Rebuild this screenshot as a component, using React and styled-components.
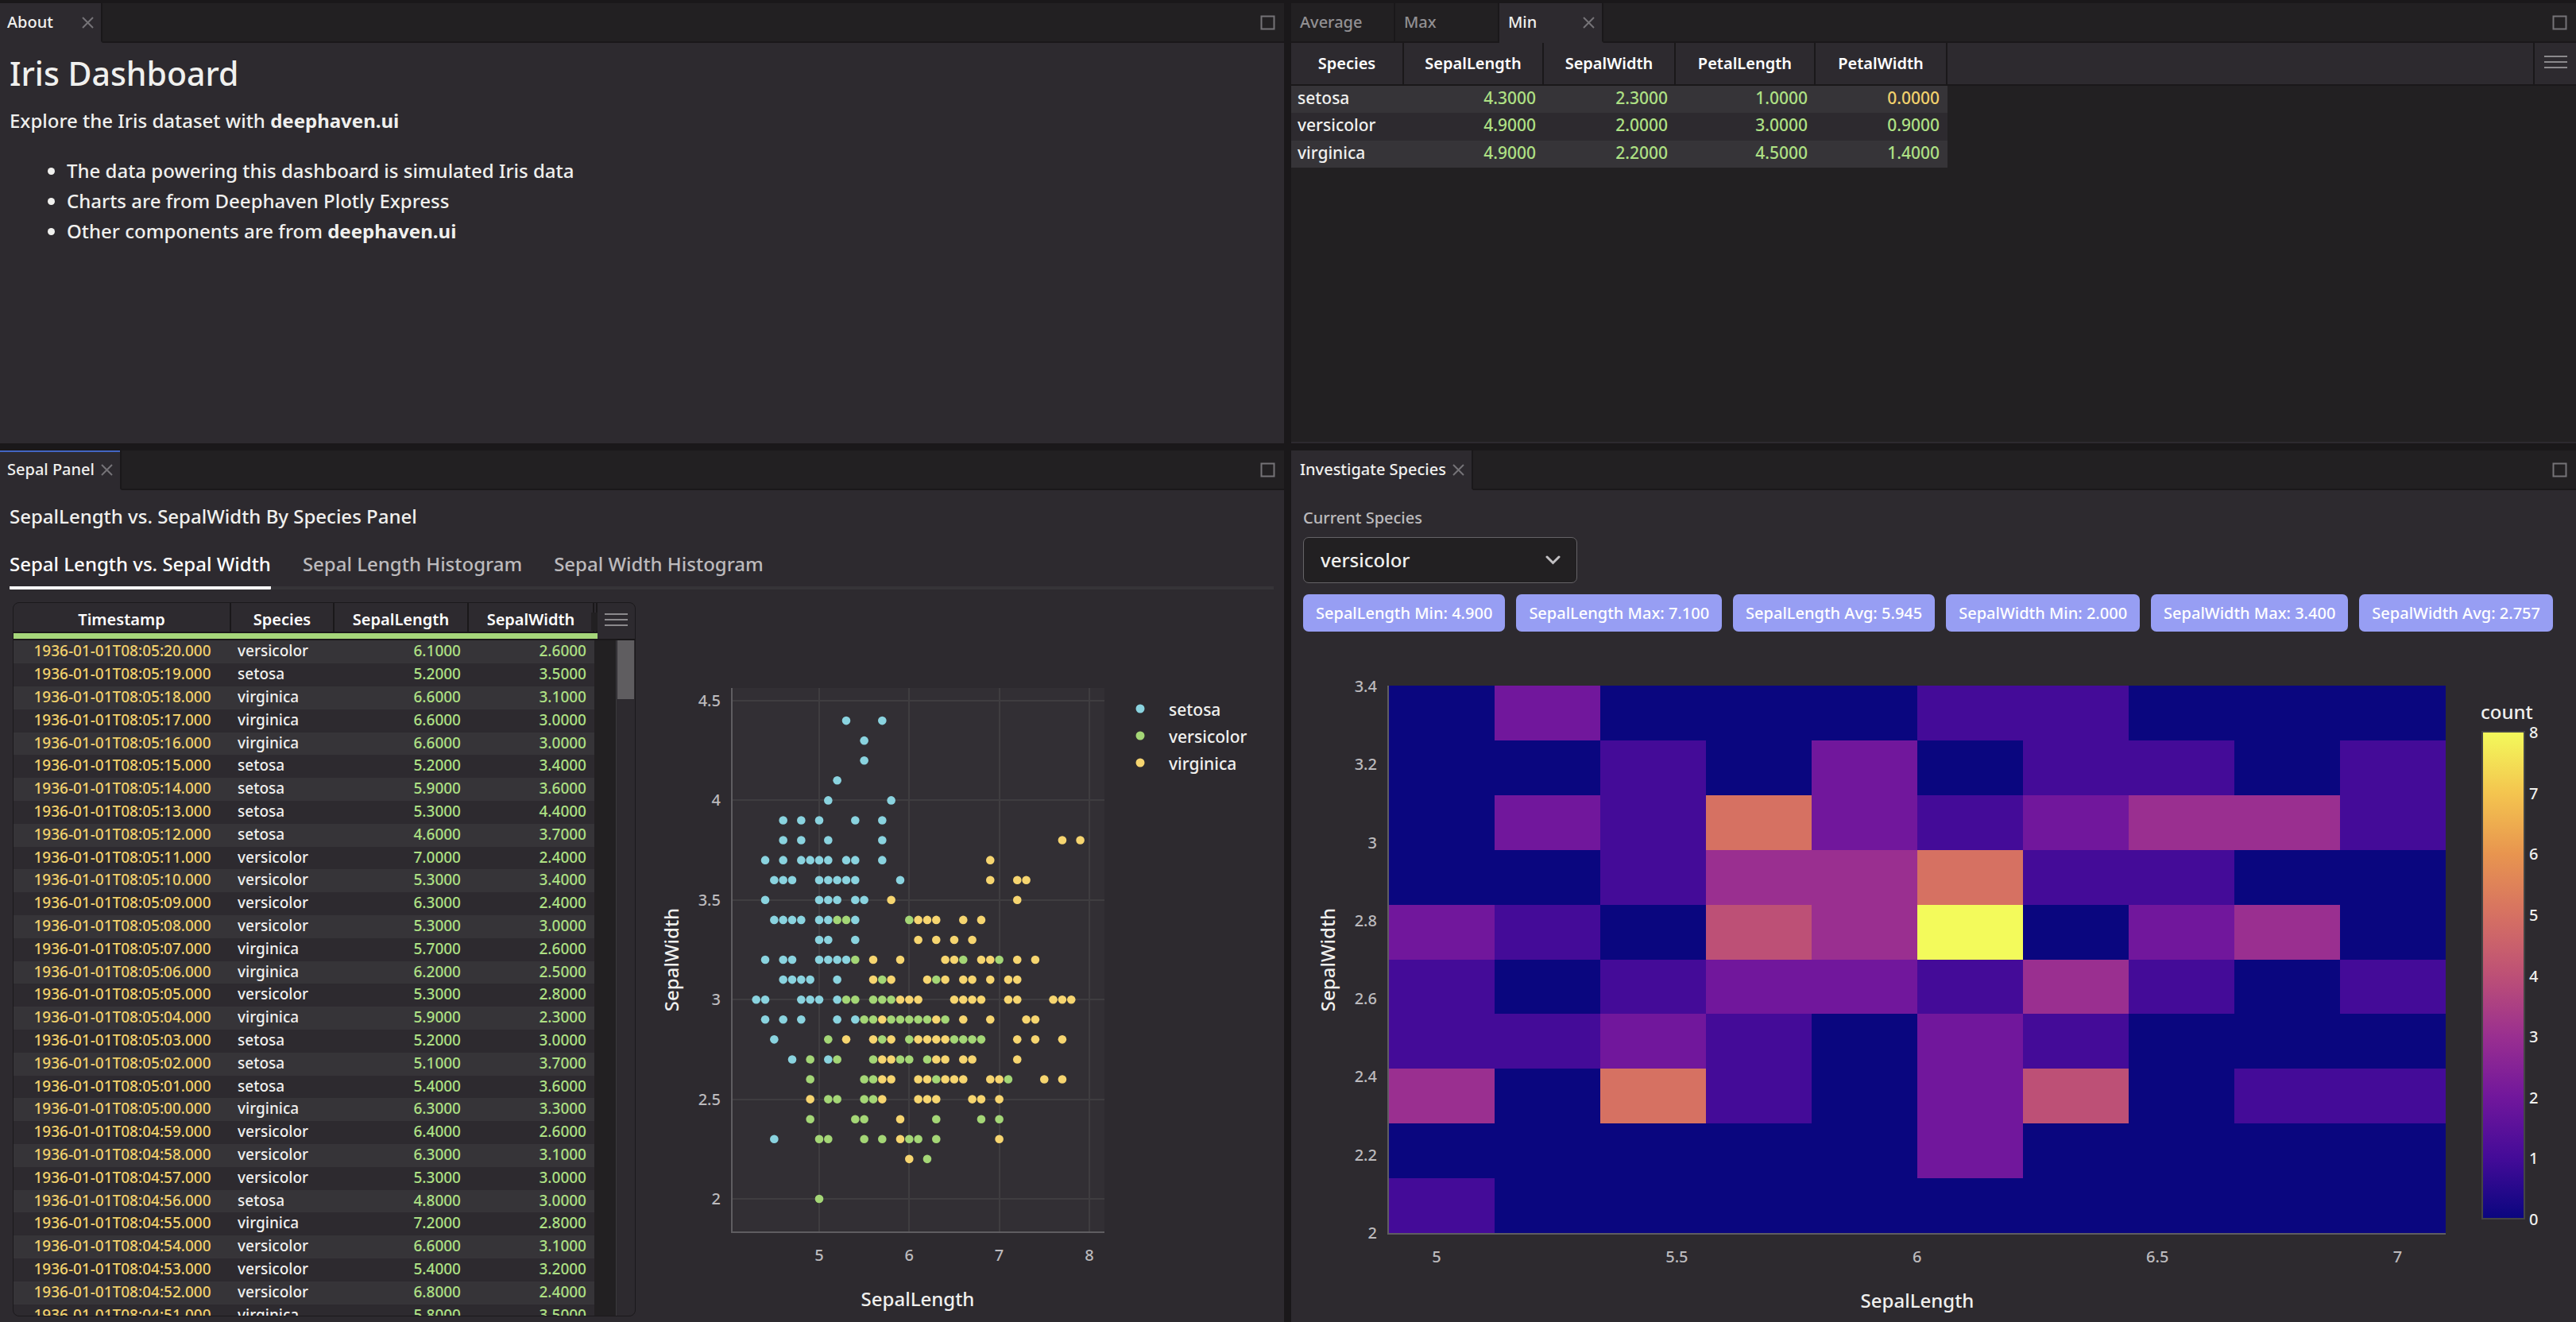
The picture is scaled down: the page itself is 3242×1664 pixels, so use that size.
import React from "react";
import styled, { createGlobalStyle, css } from "styled-components";

const color = {
  frame: "#1a181a",
  bar: "#222022",
  panel: "#2d2a2f",
  stripe: "#363438",
  plot: "#322f34",
  gridline: "#3f3d40",
  axis: "#5f5d61",
  text: "#f0f0ee",
  muted: "#bcbabd",
  dim: "#929093",
  icon: "#757377",
  green: "#aee084",
  yellow: "#f1d06c",
  loading: "#a6d67a",
  action: "#979ef3",
  focus: "#4365c2",
};

const species = { b: "#8ad3df", g: "#a4d676", y: "#f6d570" };

const GlobalStyle = createGlobalStyle`
  *, *::before, *::after { box-sizing: border-box; }
  body {
    margin: 0;
    background: ${color.frame};
    color: ${color.text};
    font-family: "Noto Sans", "Open Sans", sans-serif;
    font-size: 24px;
    font-weight: 500;
    line-height: 38px;
  }
  button, select { font: inherit; color: inherit; }
  strong { font-weight: 700; }
`;

/* ---------- dashboard frame ---------- */

const Dashboard = styled.main`
  height: 100vh;
  padding-top: 4px;
  display: grid;
  grid-template-columns: minmax(0, 1616fr) minmax(0, 1617fr);
  grid-template-rows: minmax(0, 554fr) minmax(0, 1097fr);
  gap: 9px;
`;

const Panel = styled.section`
  display: flex;
  flex-direction: column;
  min-width: 0;
  min-height: 0;
  overflow: hidden;
  background: ${color.panel};
`;

const TabBar = styled.header`
  display: flex;
  flex: none;
  height: 50px;
  background: ${color.bar};
  font-size: 20px;
  line-height: 48px;
`;

const PanelTab = styled.div`
  display: flex;
  justify-content: space-between;
  align-items: stretch;
  gap: 8px;
  min-width: ${(p) => (p.$edge ? 129 : 131)}px;
  padding: 0 9px 0 ${(p) => (p.$edge ? 9 : 11)}px;
  border-right: 2px solid ${color.frame};
  border-bottom: 2px solid ${(p) => (p.$active ? color.panel : color.frame)};
  background: ${(p) => (p.$active ? color.panel : color.bar)};
  color: ${(p) => (p.$active ? color.text : color.dim)};
  box-shadow: ${(p) => (p.$focused ? `inset 0 2px ${color.focus}` : "none")};
`;

const PlainButton = styled.button`
  display: flex;
  align-items: center;
  padding: 0;
  border: 0;
  background: none;
  cursor: pointer;
`;

const TabBarEnd = styled.div`
  display: flex;
  flex: 1;
  justify-content: flex-end;
  align-items: center;
  padding-right: 11px;
  border-bottom: 2px solid ${color.frame};
`;

const CloseIcon = () => (
  <svg width="15" height="15" viewBox="0 0 15 15" aria-hidden="true">
    <path d="M1 1 14 14M14 1 1 14" stroke={color.icon} strokeWidth="2" />
  </svg>
);

const MaximizeIcon = () => (
  <svg width="19" height="19" viewBox="0 0 19 19" aria-hidden="true">
    <rect x="1.5" y="1.5" width="16" height="16" fill="none" stroke={color.icon} strokeWidth="2" />
  </svg>
);

const MenuIcon = () => (
  <svg width="29" height="18" viewBox="0 0 29 18" aria-hidden="true">
    <path d="M0 2H29M0 9H29M0 16H29" stroke="#8b898c" strokeWidth="2" />
  </svg>
);

function PanelHeader({ tabs, active, focused, edge }) {
  return (
    <TabBar>
      {tabs.map((t) => (
        <PanelTab key={t} $active={t === active} $focused={focused} $edge={edge}>
          <PlainButton>{t}</PlainButton>
          {t === active && (
            <PlainButton aria-label={`Close ${t}`}>
              <CloseIcon />
            </PlainButton>
          )}
        </PanelTab>
      ))}
      <TabBarEnd>
        <PlainButton aria-label="Maximize panel">
          <MaximizeIcon />
        </PlainButton>
      </TabBarEnd>
    </TabBar>
  );
}

/* ---------- about ---------- */

const Article = styled.div`
  padding: 12px;
`;

const Title = styled.h1`
  margin: 0 0 15px;
  font-size: 41px;
  font-weight: 500;
  line-height: 52px;
`;

const Paragraph = styled.p`
  margin: 0;
`;

const BulletList = styled.ul`
  margin: 25px 0 0;
  padding-left: 72px;
`;

/* ---------- data grids ---------- */

const DataTable = styled.table`
  flex: none;
  width: ${(p) => p.$width}px;
  table-layout: fixed;
  border-spacing: 0;
  align-self: flex-start;
`;

const HeadCell = styled.th`
  position: relative;
  height: ${(p) => (p.$compact ? 38 : 54)}px;
  padding: ${(p) => (p.$compact ? "6px 0 0" : "0")};
  border-right: 2px solid ${color.frame};
  border-bottom: 2px solid ${color.frame};
  background: ${color.panel};
  color: #fff;
  font-size: 20px;
  font-weight: 600;
  line-height: 30px;
`;

const ColumnHandle = styled.span`
  position: absolute;
  right: -6px;
  bottom: 1px;
  z-index: 1;
  width: 8px;
  height: 23px;
  background: ${color.bar};
`;

const LoadingCell = styled.td`
  height: 9px;
  padding: 0;
  border-bottom: 2px solid ${color.frame};
  background: ${color.loading};
`;

const stripes = css`
  &:nth-child(odd) td { background: ${color.stripe}; }
  &:nth-child(even) td { background: ${color.panel}; }
`;

const SummaryRow = styled.tr`
  height: 34px;
  ${stripes}
  td { font-size: 21px; line-height: 30px; }
  &:nth-child(even) { height: 35px; }
`;

const TickRow = styled.tr`
  height: 29px;
  ${stripes}
  td { font-size: 19px; line-height: 27px; }
  &:nth-child(5n) { height: 28px; }
`;

const Cell = styled.td`
  padding: 0 ${(p) => (p.$kind === "time" ? 0 : 10)}px 0 ${(p) => (p.$kind === "time" ? 0 : 8)}px;
  vertical-align: top;
  white-space: nowrap;
  text-align: ${(p) => ({ num: "right", zero: "right", time: "center" }[p.$kind] || "left")};
  color: ${(p) => ({ num: color.green, zero: color.yellow, time: color.yellow }[p.$kind] || color.text)};
`;

const EmptyCell = styled.td`
  &&& { background: ${color.bar}; }
  padding: 0;
`;

const GridArea = styled.div`
  display: flex;
  flex: 1;
  background: ${color.bar};
  border-bottom: 2px solid ${color.panel};
`;

const HeadFiller = styled.div`
  flex: 1;
  height: 54px;
  border-right: 2px solid ${color.frame};
  border-bottom: 2px solid ${color.frame};
  background: ${color.panel};
`;

const MenuCell = styled.div`
  display: flex;
  flex: none;
  justify-content: center;
  width: ${(p) => p.$width}px;
  height: ${(p) => p.$height}px;
  padding-bottom: 4px;
  border-bottom: 2px solid ${color.frame};
  background: ${color.panel};
`;

const minRows = [
  ["setosa", "4.3000", "2.3000", "1.0000", "0.0000"],
  ["versicolor", "4.9000", "2.0000", "3.0000", "0.9000"],
  ["virginica", "4.9000", "2.2000", "4.5000", "1.4000"],
];

function SummaryGrid() {
  return (
    <GridArea>
      <DataTable $width={826}>
        <colgroup>
          {[142, 176, 166, 176, 166].map((w, i) => (
            <col key={i} width={w} />
          ))}
        </colgroup>
        <thead>
          <tr>
            {["Species", "SepalLength", "SepalWidth", "PetalLength", "PetalWidth"].map((h) => (
              <HeadCell key={h} scope="col">{h}</HeadCell>
            ))}
          </tr>
        </thead>
        <tbody>
          {minRows.map(([name, ...values]) => (
            <SummaryRow key={name}>
              <Cell>{name}</Cell>
              {values.map((v, i) => (
                <Cell key={i} $kind={Number(v) === 0 ? "zero" : "num"}>{v}</Cell>
              ))}
            </SummaryRow>
          ))}
        </tbody>
      </DataTable>
      <HeadFiller />
      <MenuCell $width={52} $height={54}>
        <PlainButton aria-label="Table options"><MenuIcon /></PlainButton>
      </MenuCell>
    </GridArea>
  );
}

/* ---------- sepal panel ---------- */

const SepalBody = styled.div`
  display: flex;
  flex: 1;
  flex-direction: column;
  min-height: 0;
  padding-top: 14px;
`;

const Heading = styled.p`
  margin: 0 12px 22px;
`;

const ViewTabs = styled.nav`
  display: flex;
  gap: 40px;
  margin: 0 13px 0 12px;
  box-shadow: inset 0 -4px ${color.stripe};
`;

const ViewTab = styled(PlainButton)`
  padding-bottom: 9px;
  border-bottom: 4px solid ${(p) => (p.$active ? "#fff" : "transparent")};
  border-radius: 1px;
  color: ${(p) => (p.$active ? "#fff" : color.muted)};
`;

const SplitRow = styled.div`
  display: flex;
  flex: 1;
  min-height: 0;
  padding-top: 16px;
`;

const TickGrid = styled.div`
  display: flex;
  flex: none;
  width: 784px;
  margin: 0 0 7px 16px;
  overflow: hidden;
  border: 1px solid #1b191c;
  border-radius: 8px;
  background: ${color.bar};
`;

const GridSide = styled.div`
  display: flex;
  flex: 1;
  flex-direction: column;
`;

const ScrollTrack = styled.div`
  align-self: flex-end;
  flex: 1;
  width: 24px;
  padding: 0 1px;
  border-left: 1px solid #3b393d;
  background: ${color.panel};
`;

const ScrollThumb = styled.div`
  height: 74px;
  background: #5f5d60;
`;

const tickData = `versicolor 6.1 2.6|setosa 5.2 3.5|virginica 6.6 3.1|virginica 6.6 3.0|virginica 6.6 3.0
setosa 5.2 3.4|setosa 5.9 3.6|setosa 5.3 4.4|setosa 4.6 3.7|versicolor 7.0 2.4
versicolor 5.3 3.4|versicolor 6.3 2.4|versicolor 5.3 3.0|virginica 5.7 2.6|virginica 6.2 2.5
versicolor 5.3 2.8|virginica 5.9 2.3|setosa 5.2 3.0|setosa 5.1 3.7|setosa 5.4 3.6
virginica 6.3 3.3|versicolor 6.4 2.6|versicolor 6.3 3.1|versicolor 5.3 3.0|setosa 4.8 3.0
virginica 7.2 2.8|versicolor 6.6 3.1|versicolor 5.4 3.2|versicolor 6.8 2.4|virginica 5.8 3.5`;

const tickRows = tickData.split(/[|\n]/).map((line, i) => {
  const [name, length, width] = line.split(" ");
  const t = 320 - i;
  const time = `1936-01-01T08:0${Math.floor(t / 60)}:${String(t % 60).padStart(2, "0")}.000`;
  return { time, name, length: `${length}000`, width: `${width}000` };
});

function SepalGrid() {
  return (
    <TickGrid>
      <DataTable $width={735}>
        <colgroup>
          {[274, 130, 169, 158, 4].map((w, i) => (
            <col key={i} width={w} />
          ))}
        </colgroup>
        <thead>
          <tr>
            {["Timestamp", "Species", "SepalLength", "SepalWidth"].map((h) => (
              <HeadCell key={h} scope="col" $compact>
                {h}
                {h === "SepalWidth" && <ColumnHandle />}
              </HeadCell>
            ))}
            <HeadCell as="td" $compact />
          </tr>
          <tr>
            <LoadingCell colSpan={5} />
          </tr>
        </thead>
        <tbody>
          {tickRows.map((r) => (
            <TickRow key={r.time}>
              <Cell $kind="time">{r.time}</Cell>
              <Cell>{r.name}</Cell>
              <Cell $kind="num">{r.length}</Cell>
              <Cell $kind="num">{r.width}</Cell>
              <EmptyCell />
            </TickRow>
          ))}
        </tbody>
      </DataTable>
      <GridSide>
        <MenuCell $width={47} $height={47}>
          <PlainButton aria-label="Table options"><MenuIcon /></PlainButton>
        </MenuCell>
        <ScrollTrack>
          <ScrollThumb />
        </ScrollTrack>
      </GridSide>
    </TickGrid>
  );
}

/* ---------- charts ---------- */

const Chart = styled.svg`
  display: block;
  flex: 1;
  min-width: 0;
  min-height: 0;
  width: 100%;
`;

const TickText = styled.text`
  fill: ${(p) => (p.$bright ? color.text : color.muted)};
  font-size: 20px;
`;

const LegendText = styled.text`
  fill: ${color.text};
  font-size: 21px;
`;

const AxisTitle = styled.text`
  fill: ${color.text};
  font-size: 24px;
`;

// Each entry lists the marks on one SepalWidth level; a mark is its species letter and SepalLength × 10.
const scatterLevels = {
  44: "b53 b57",
  43: "b55",
  42: "b55",
  41: "b52",
  40: "b51 b58",
  39: "b46 b48 b50 b54 b57",
  38: "b46 b48 b51 b57 y77 y79",
  37: "b44 b46 b48 b49 b50 b51 b53 b54 b57 y69",
  36: "b45 b46 b47 b50 b51 b52 b53 b54 b59 y69 y72 y73",
  35: "b44 b50 b51 b52 b54 b55 y58 y72",
  34: "b45 b46 b47 b48 b50 b51 g52 g53 b54 g60 y61 y62 y63 y66 y68",
  33: "b50 b51 b54 y61 y63 y65 y67",
  32: "b44 b46 b47 b50 b51 b52 b53 g54 y56 y59 y64 y65 g66 y68 y69 g70 y72 y74",
  31: "b46 b47 b48 b49 b52 y56 g57 y58 y62 g63 y64 y66 y67 y69 y71 y72",
  30: "b43 b44 b48 b49 b50 b52 g53 g54 g56 g57 g58 y59 y60 y61 y65 y66 y67 y68 y71 y72 y76 y77 y78",
  29: "b44 b46 b48 b52 b54 g55 g56 y57 g58 g59 g60 g61 g62 y63 g64 y66 y69 y73 y74",
  28: "b45 g51 y53 y56 g57 y58 g60 y61 y62 y63 y64 g65 g66 g67 g68 y72 y74 y77",
  27: "b47 g49 b51 g52 g56 y57 y58 g59 g60 g62 y63 y64 y66 y67 y72",
  26: "g49 g55 g56 y57 y58 y61 y62 g63 y64 y65 y66 y69 y70 g71 y75 y77",
  25: "y49 g51 g52 g55 g56 y57 y61 y62 y63 y67 y68 y70",
  24: "g49 g54 g55 y59 g63 g68 g70",
  23: "b45 g50 g51 g55 g57 y59 g60 g61 g63 y70",
  22: "y60 g62",
  20: "g50",
};

const sx = (v) => 231 + (v - 5) * 113.3;
const sy = (v) => 751 - (v - 2) * 250.8;

function ScatterChart() {
  return (
    <Chart viewBox="0 0 816 906" role="img" aria-label="SepalWidth by SepalLength for each species">
      <rect x="121" y="108" width="469" height="685" fill={color.plot} />
      <g stroke={color.gridline} strokeWidth="2">
        {[5, 6, 7, 8].map((v) => (
          <line key={v} x1={Math.round(sx(v))} x2={Math.round(sx(v))} y1="108" y2="792" />
        ))}
        {[2, 2.5, 3, 3.5, 4, 4.5].map((v) => (
          <line key={v} y1={Math.round(sy(v))} y2={Math.round(sy(v))} x1="121" x2="590" />
        ))}
      </g>
      <path d="M121 108V793H590" fill="none" stroke={color.axis} strokeWidth="2" />
      {Object.entries(scatterLevels).flatMap(([w, marks]) =>
        marks.split(" ").map((m) => (
          <circle key={w + m} cx={sx(m.slice(1) / 10)} cy={sy(w / 10)} r="5.3" fill={species[m[0]]} />
        ))
      )}
      {[5, 6, 7, 8].map((v) => (
        <TickText key={v} x={sx(v)} y="829" textAnchor="middle">{v}</TickText>
      ))}
      {[2, 2.5, 3, 3.5, 4, 4.5].map((v) => (
        <TickText key={v} x="107" y={sy(v) + 7} textAnchor="end">{v}</TickText>
      ))}
      <AxisTitle x="355" y="886" textAnchor="middle">SepalLength</AxisTitle>
      <AxisTitle transform="translate(54 450) rotate(-90)" textAnchor="middle">SepalWidth</AxisTitle>
      {[["setosa", "b"], ["versicolor", "g"], ["virginica", "y"]].map(([name, key], i) => (
        <g key={name}>
          <circle cx="635" cy={134 + i * 34} r="5.5" fill={species[key]} />
          <LegendText x="671" y={143 + i * 34}>{name}</LegendText>
        </g>
      ))}
    </Chart>
  );
}

const scale = ["#0a067f", "#440b98", "#71179c", "#9a2f90", "#bd5076", "#d67162", "#e8954f", "#f4c54f", "#f3fa5b"];

const heat = [
  "0200011000",
  "0010201101",
  "0215212331",
  "0013351100",
  "2104380230",
  "1012213101",
  "1121021000",
  "3051024011",
  "0000020000",
  "1000000000",
];

function HeatmapChart() {
  return (
    <Chart viewBox="0 0 1617 869" role="img" aria-label="Density of SepalLength and SepalWidth">
      <defs>
        <linearGradient id="count-scale" x1="0" y1="1" x2="0" y2="0">
          {scale.map((c, i) => (
            <stop key={c} offset={i / 8} stopColor={c} />
          ))}
        </linearGradient>
      </defs>
      <g shapeRendering="crispEdges">
        <rect x="123" y="68" width="1330" height="689" fill={scale[0]} />
        {heat.flatMap((line, r) =>
          [...line].map((n, c) =>
            n === "0" ? null : (
              <rect key={`${r}-${c}`} x={123 + c * 133} y={68 + r * 68.9} width="133" height="68.9" fill={scale[n]} />
            )
          )
        )}
      </g>
      <path d="M122 68V758H1453" fill="none" stroke={color.axis} strokeWidth="2" />
      {[5, 5.5, 6, 6.5, 7].map((v) => (
        <TickText key={v} x={183 + (v - 5) * 604.8} y="794" textAnchor="middle">{v}</TickText>
      ))}
      {[2, 2.2, 2.4, 2.6, 2.8, 3, 3.2, 3.4].map((v) => (
        <TickText key={v} x="108" y={764 - (v - 2) * 491.5} textAnchor="end">{v}</TickText>
      ))}
      <AxisTitle x="788" y="851" textAnchor="middle">SepalLength</AxisTitle>
      <AxisTitle transform="translate(55 413) rotate(-90)" textAnchor="middle">SepalWidth</AxisTitle>
      <AxisTitle x="1497" y="110">count</AxisTitle>
      <rect x="1499" y="126" width="53" height="613" fill="url(#count-scale)" stroke="#444" strokeWidth="2" />
      {[0, 1, 2, 3, 4, 5, 6, 7, 8].map((v) => (
        <TickText key={v} $bright x="1558" y={747 - v * 76.6}>{v}</TickText>
      ))}
    </Chart>
  );
}

/* ---------- investigate species ---------- */

const InvestigateBody = styled.div`
  display: flex;
  flex: 1;
  flex-direction: column;
  min-height: 0;
  padding-top: 20px;
`;

const FieldLabel = styled.label`
  margin: 0 15px 9px;
  color: ${color.muted};
  font-size: 20px;
  line-height: 30px;
`;

const Picker = styled.div`
  position: relative;
  width: 345px;
  margin: 0 15px 14px;
  svg {
    position: absolute;
    right: 21px;
    top: 23px;
    pointer-events: none;
  }
`;

const Select = styled.select`
  display: block;
  width: 100%;
  height: 58px;
  padding: 0 21px;
  appearance: none;
  border: 1px solid #656367;
  border-radius: 7px;
  background: ${color.bar};
`;

const StatRow = styled.div`
  display: flex;
  gap: 14px;
  padding: 0 15px;
`;

const StatButton = styled.button`
  flex: none;
  height: 47px;
  padding: 0 16px;
  border: 0;
  border-radius: 7px;
  background: ${color.action};
  color: #fff;
  font-size: 20px;
  line-height: 46px;
`;

const stats = [
  "SepalLength Min: 4.900",
  "SepalLength Max: 7.100",
  "SepalLength Avg: 5.945",
  "SepalWidth Min: 2.000",
  "SepalWidth Max: 3.400",
  "SepalWidth Avg: 2.757",
];

export default function App() {
  return (
    <>
      <GlobalStyle />
      <Dashboard>
        <Panel>
          <PanelHeader tabs={["About"]} active="About" edge />
          <Article>
            <Title>Iris Dashboard</Title>
            <Paragraph>
              Explore the Iris dataset with <strong>deephaven.ui</strong>
            </Paragraph>
            <BulletList>
              <li>The data powering this dashboard is simulated Iris data</li>
              <li>Charts are from Deephaven Plotly Express</li>
              <li>
                Other components are from <strong>deephaven.ui</strong>
              </li>
            </BulletList>
          </Article>
        </Panel>

        <Panel>
          <PanelHeader tabs={["Average", "Max", "Min"]} active="Min" />
          <SummaryGrid />
        </Panel>

        <Panel>
          <PanelHeader tabs={["Sepal Panel"]} active="Sepal Panel" focused edge />
          <SepalBody>
            <Heading>SepalLength vs. SepalWidth By Species Panel</Heading>
            <ViewTabs>
              <ViewTab $active>Sepal Length vs. Sepal Width</ViewTab>
              <ViewTab>Sepal Length Histogram</ViewTab>
              <ViewTab>Sepal Width Histogram</ViewTab>
            </ViewTabs>
            <SplitRow>
              <SepalGrid />
              <ScatterChart />
            </SplitRow>
          </SepalBody>
        </Panel>

        <Panel>
          <PanelHeader tabs={["Investigate Species"]} active="Investigate Species" />
          <InvestigateBody>
            <FieldLabel htmlFor="species">Current Species</FieldLabel>
            <Picker>
              <Select id="species" defaultValue="versicolor">
                <option>setosa</option>
                <option>versicolor</option>
                <option>virginica</option>
              </Select>
              <svg width="19" height="12" viewBox="0 0 19 12" aria-hidden="true">
                <path d="M2 2 9.5 9.5 17 2" fill="none" stroke="#c3c1c4" strokeWidth="3" strokeLinecap="round" />
              </svg>
            </Picker>
            <StatRow>
              {stats.map((s) => (
                <StatButton key={s}>{s}</StatButton>
              ))}
            </StatRow>
            <HeatmapChart />
          </InvestigateBody>
        </Panel>
      </Dashboard>
    </>
  );
}
